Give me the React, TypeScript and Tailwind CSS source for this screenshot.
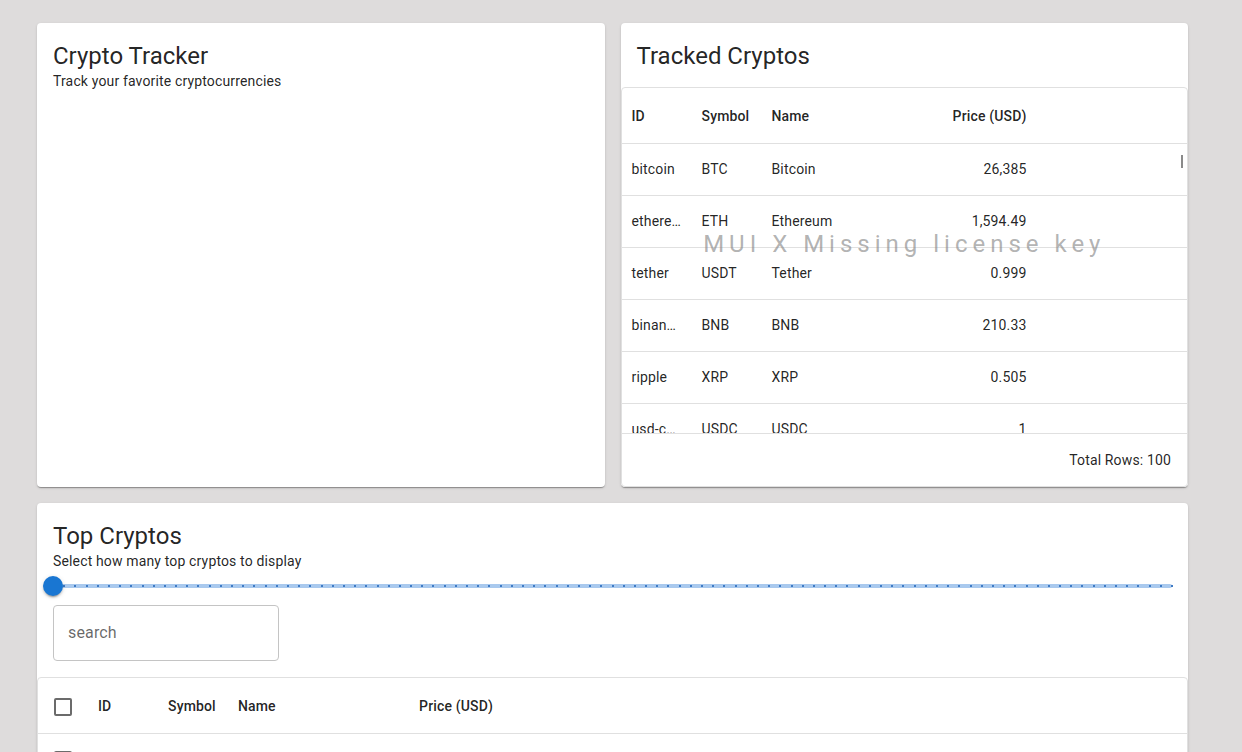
import React from 'react';

type Coin = { id: string; symbol: string; name: string; price: string };

const coins: Coin[] = [
  { id: 'bitcoin', symbol: 'BTC', name: 'Bitcoin', price: '26,385' },
  { id: 'ethereum', symbol: 'ETH', name: 'Ethereum', price: '1,594.49' },
  { id: 'tether', symbol: 'USDT', name: 'Tether', price: '0.999' },
  { id: 'binancecoin', symbol: 'BNB', name: 'BNB', price: '210.33' },
  { id: 'ripple', symbol: 'XRP', name: 'XRP', price: '0.505' },
  { id: 'usd-coin', symbol: 'USDC', name: 'USDC', price: '1' },
  { id: 'staked-ether', symbol: 'STETH', name: 'Lido Staked Ether', price: '1,593.1' },
];

const cardCls =
  'bg-white rounded-[4px] shadow-[0px_2px_1px_-1px_rgba(0,0,0,0.2),0px_1px_1px_0px_rgba(0,0,0,0.14),0px_1px_3px_0px_rgba(0,0,0,0.12)]';

const Checkbox = () => (
  <div className="w-[18px] h-[18px] rounded-[2px] border-2 border-[#6b6b6b]" />
);

const HeaderCells = () => (
  <>
    <div className="w-[70px] px-[10px] font-medium">ID</div>
    <div className="w-[70px] px-[10px] font-medium">Symbol</div>
    <div className="w-[150px] px-[10px] font-medium">Name</div>
    <div className="w-[125px] px-[10px] font-medium text-right">Price (USD)</div>
  </>
);

const RowCells = ({ coin }: { coin: Coin }) => (
  <>
    <div className="w-[70px] px-[10px] truncate">{coin.id}</div>
    <div className="w-[70px] px-[10px] truncate">{coin.symbol}</div>
    <div className="w-[150px] px-[10px] truncate">{coin.name}</div>
    <div className="w-[125px] px-[10px] text-right">{coin.price}</div>
  </>
);

const Slider = () => {
  const marks = Array.from({ length: 101 }, (_, i) => i);
  return (
    <div className="h-[30px] flex items-center">
      <div className="relative w-full h-[4px] rounded-full bg-[#a9c9ee]">
        {marks.map((m) => (
          <span
            key={m}
            className="absolute top-[1px] w-[2px] h-[2px] bg-[#3f7bc5] -translate-x-1/2"
            style={{ left: `${m}%` }}
          />
        ))}
        <span className="absolute left-0 top-1/2 -translate-x-1/2 -translate-y-1/2 w-[20px] h-[20px] rounded-full bg-[#1976d2] shadow-[0px_3px_1px_-2px_rgba(0,0,0,0.2),0px_2px_2px_0px_rgba(0,0,0,0.14),0px_1px_5px_0px_rgba(0,0,0,0.12)]" />
      </div>
    </div>
  );
};

export default function App() {
  return (
    <div
      className="min-h-screen bg-[#dedcdc] text-[rgba(0,0,0,0.87)] pt-[23px] pl-[37px] pb-8"
      style={{ fontFamily: 'Roboto, "Liberation Sans", sans-serif' }}
    >
      <div className="w-[1151px] flex flex-col gap-4">
        <div className="grid grid-cols-2 gap-4 h-[464px]">
          {/* left */}
          <div className={`${cardCls} p-4`}>
            <h5 className="text-[24px] leading-[32px] pt-[1px] -mb-[1px]">Crypto Tracker</h5>
            <p className="text-[14px] leading-[20px] tracking-[0.15px]">Track your favorite cryptocurrencies</p>
          </div>

          {/* right */}
          <div className={`${cardCls} flex flex-col overflow-hidden`}>
            <div className="p-4">
              <h5 className="text-[24px] leading-[32px] pt-[1px] -mb-[1px]">Tracked Cryptos</h5>
            </div>
            <div className="relative flex-1 flex flex-col border border-[#e0e0e0] rounded-[4px] text-[14px] tracking-[0.15px] min-h-0">
              <div className="h-[56px] flex items-center border-b border-[#e0e0e0] shrink-0 pt-[2px]">
                <HeaderCells />
              </div>
              <div className="relative flex-1 overflow-hidden min-h-0">
                {coins.map((c) => (
                  <div key={c.id} className="h-[52px] flex items-center border-b border-[#e0e0e0]">
                    <RowCells coin={c} />
                  </div>
                ))}
                <span className="absolute right-[4px] top-[11px] w-[2px] h-[13px] bg-[#8a8a8a]" />
              </div>
              <div className="absolute left-0 right-0 top-[142px] text-center text-[24px] leading-[28px] tracking-[5px] text-[#8282829e] pointer-events-none">
                MUI X Missing license key
              </div>
              <div className="h-[53px] shrink-0 border-t border-[#e0e0e0] flex items-center justify-end pr-4">
                Total Rows: 100
              </div>
            </div>
          </div>
        </div>

        {/* bottom */}
        <div className={`${cardCls} overflow-hidden`}>
          <div className="p-4">
            <h5 className="text-[24px] leading-[32px] pt-[1px] -mb-[1px]">Top Cryptos</h5>
            <p className="text-[14px] leading-[20px] tracking-[0.15px]">Select how many top cryptos to display</p>
            <Slider />
            <div className="mt-[4px] w-[226px] h-[56px] border border-[#c4c4c4] rounded-[4px] flex items-center px-[14px] text-[16px] tracking-[0.15px] text-[rgba(0,0,0,0.6)]">
              search
            </div>
          </div>
          <div className="border border-[#e0e0e0] rounded-[4px] text-[14px] tracking-[0.15px]">
            <div className="h-[56px] flex items-center border-b border-[#e0e0e0] pt-[2px]">
              <div className="w-[50px] flex justify-center">
                <Checkbox />
              </div>
              <HeaderCells />
            </div>
            {coins.map((c) => (
              <div key={c.id} className="h-[52px] flex items-center border-b border-[#e0e0e0]">
                <div className="w-[50px] flex justify-center">
                  <Checkbox />
                </div>
                <RowCells coin={c} />
              </div>
            ))}
          </div>
        </div>
      </div>
    </div>
  );
}
